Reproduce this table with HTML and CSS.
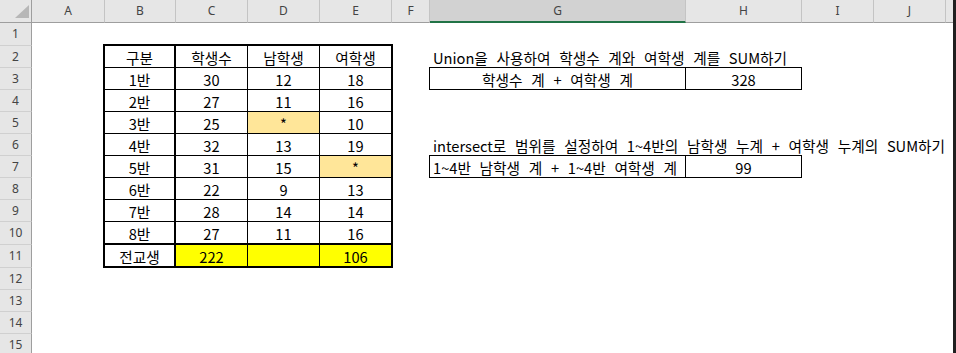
FILE: index.html
```html
<!DOCTYPE html>
<html lang="ko">
<head>
<meta charset="utf-8">
<title>Sheet</title>
<link rel="stylesheet" href="styles.css">
</head>
<body>
<div class="window">
  <div class="sheet">
    <div class="corner"><svg width="31" height="22" viewBox="0 0 31 22"><polygon points="15,18 29,18 29,5" fill="#b7b7b7"/></svg></div>
    <div class="ch">A</div>
    <div class="ch">B</div>
    <div class="ch">C</div>
    <div class="ch">D</div>
    <div class="ch">E</div>
    <div class="ch">F</div>
    <div class="ch sel">G</div>
    <div class="ch">H</div>
    <div class="ch">I</div>
    <div class="ch">J</div>
    <div class="ch last"></div>

    <div class="rh">1</div>
    <div class="rh">2</div>
    <div class="rh">3</div>
    <div class="rh">4</div>
    <div class="rh">5</div>
    <div class="rh">6</div>
    <div class="rh">7</div>
    <div class="rh">8</div>
    <div class="rh">9</div>
    <div class="rh">10</div>
    <div class="rh">11</div>
    <div class="rh">12</div>
    <div class="rh">13</div>
    <div class="rh">14</div>
    <div class="rh">15</div>

    <div class="tbl">
      <div class="c b">구분</div><div class="c">학생수</div><div class="c">남학생</div><div class="c e">여학생</div>
      <div class="c b">1반</div><div class="c">30</div><div class="c">12</div><div class="c e">18</div>
      <div class="c b">2반</div><div class="c">27</div><div class="c">11</div><div class="c e">16</div>
      <div class="c b">3반</div><div class="c">25</div><div class="c gold">*</div><div class="c e">10</div>
      <div class="c b">4반</div><div class="c">32</div><div class="c">13</div><div class="c e">19</div>
      <div class="c b">5반</div><div class="c">31</div><div class="c">15</div><div class="c e gold">*</div>
      <div class="c b">6반</div><div class="c">22</div><div class="c">9</div><div class="c e">13</div>
      <div class="c b">7반</div><div class="c">28</div><div class="c">14</div><div class="c e">14</div>
      <div class="c b r10">8반</div><div class="c r10">27</div><div class="c r10">11</div><div class="c e r10">16</div>
      <div class="c b r11">전교생</div><div class="c r11 yel">222</div><div class="c r11 yel"></div><div class="c e r11 yel">106</div>
    </div>

    <div class="note n1">Union을 사용하여 학생수 계와 여학생 계를 SUM하기</div>
    <div class="box bx1">
      <div class="bc bg">학생수 계 + 여학생 계</div>
      <div class="bc bh">328</div>
    </div>

    <div class="note n2">intersect로 범위를 설정하여 1~4반의 남학생 누계 + 여학생 누계의 SUM하기</div>
    <div class="box bx2">
      <div class="bc bg">1~4반 남학생 계 + 1~4반 여학생 계</div>
      <div class="bc bh">99</div>
    </div>
  </div>
  <div class="edge"></div>
</div>
</body>
</html>
```

FILE: styles.css
```css
* { box-sizing: border-box; }
html, body { margin: 0; padding: 0; background: #ffffff; }
body { width: 956px; height: 353px; overflow: hidden; }

.window {
  display: flex;
  width: 956px;
  height: 353px;
  overflow: hidden;
}

.sheet {
  width: 953px;
  height: 353px;
  overflow: hidden;
  display: grid;
  grid-template-columns: 32px 73px 71px 72px 72px 72px 38px 256px 116px 72px 72px 7px;
  grid-template-rows: 23px 23px repeat(8, 22px) 23px 23px repeat(4, 22px);
  background: #ffffff;
  font-family: "Noto Sans CJK KR", "Noto Sans", sans-serif;
  font-size: 14.67px;
  word-spacing: 4.6px;
  color: #000;
}

.edge { width: 3px; height: 353px; background: #202020; }

.corner {
  background: #e6e6e6;
  border-right: 1px solid #9e9e9e;
  border-bottom: 1px solid #9e9e9e;
}
.corner svg { display: block; }

.ch {
  background: #e6e6e6;
  border-right: 1px solid #c4c4c4;
  border-bottom: 1px solid #9e9e9e;
  font-family: "Noto Sans", "Open Sans", sans-serif;
  font-size: 12px;
  color: #444;
  text-align: center;
  line-height: 22px;
}
.ch.sel {
  background: #d2d2d2;
  border-bottom: 2px solid #217346;
  line-height: 21px;
}
.ch.last { border-right: none; }

.rh {
  grid-column: 1;
  background: #e6e6e6;
  border-right: 1px solid #9e9e9e;
  border-bottom: 1px solid #d0d0d0;
  font-family: "Noto Sans", "Open Sans", sans-serif;
  font-size: 12px;
  color: #444;
  text-align: center;
  line-height: 22px;
}

.tbl {
  grid-column: 3 / 7;
  grid-row: 3 / 13;
  align-self: start;
  justify-self: start;
  margin: -2px 0 0 -2px;
  width: 290px;
  height: 224px;
  border: 2px solid #000;
  display: grid;
  grid-template-columns: 71px 72px 72px 71px;
  grid-template-rows: repeat(8, 22px) 23px 21px;
}

.c {
  border-right: 1px solid #000;
  border-bottom: 1px solid #000;
  text-align: center;
  line-height: 21px;
  padding-top: 1px;
  white-space: nowrap;
}
.c.b { border-right-width: 2px; }
.c.e { border-right: none; }
.c.r10 { border-bottom-width: 2px; }
.c.r11 { border-bottom: none; }
.c.gold { background: #ffe699; }
.c.yel { background: #ffff00; }

.note {
  grid-column: 8 / 13;
  white-space: nowrap;
  padding-left: 3px;
  line-height: 22px;
  padding-top: 1px;
  overflow: visible;
}
.n1 { grid-row: 3; }
.n2 { grid-row: 7; }

.box {
  grid-column: 8 / 10;
  align-self: start;
  justify-self: start;
  margin: -1px 0 0 -1px;
  width: 373px;
  height: 23px;
  border: 1px solid #000;
  display: flex;
}
.bx1 { grid-row: 4; }
.bx2 { grid-row: 8; }

.bc {
  line-height: 21px;
  padding-top: 1px;
  white-space: nowrap;
  text-align: center;
}
.bg { width: 256px; border-right: 1px solid #000; }
.bh { width: 115px; }
.bx2 .bg { text-align: left; padding-left: 3px; }
```
